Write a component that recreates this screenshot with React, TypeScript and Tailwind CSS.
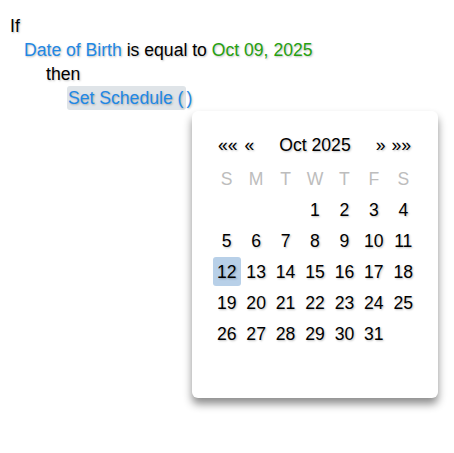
import React from "react";

const weekDays = ["S", "M", "T", "W", "T", "F", "S"];

function buildDays() {
  // Oct 2025 starts on Wednesday
  const cells: (number | null)[] = [null, null, null];
  for (let d = 1; d <= 31; d++) cells.push(d);
  while (cells.length < 42) cells.push(null);
  return cells;
}

export default function App() {
  const days = buildDays();
  const shadow = "[text-shadow:1px_1px_2px_rgba(0,0,0,0.25)]";

  return (
    <div
      className={`relative w-[454px] h-[453px] bg-white text-[17.6px] leading-[24px] text-black ${shadow}`}
      style={{ fontFamily: '"Liberation Sans", Arial, sans-serif' }}
    >
      <div className="pt-[14px]">
        <div className="pl-[10px]">If</div>
        <div className="pl-[24px]">
          <span className="text-[#1e88e5]">Date of Birth</span> is equal to{" "}
          <span className="text-[#25a010]">Oct 09, 2025</span>
        </div>
        <div className="pl-[46px]">then</div>
        <div className="pl-[67px] text-[#1e88e5]">
          <span className="inline-block rounded-[3px] bg-[#dfe4e8] pl-[1px] pr-[3px]">
            Set Schedule (
          </span>
          )
        </div>
      </div>

      {/* date picker dropdown */}
      <div className="absolute left-[192px] top-[111px] w-[246px] rounded-[6px] bg-white px-[20px] pt-[18px] pb-[18px] shadow-[0_6px_9px_rgba(0,0,0,0.45)]">
        <div className="flex h-[32px] items-center justify-between pl-[6px] pr-[7px]">
          <div className="flex gap-[7px]">
            <span>««</span>
            <span>«</span>
          </div>
          <span>Oct 2025</span>
          <div className="flex gap-[6px]">
            <span>»</span>
            <span>»»</span>
          </div>
        </div>
        <div className="mt-[2px] grid grid-cols-7">
          {weekDays.map((d, i) => (
            <div
              key={i}
              className="flex h-[31px] items-center justify-center text-[#bdbdbd] [text-shadow:none]"
            >
              {d}
            </div>
          ))}
        </div>
        <div className="grid grid-cols-7">
          {days.map((d, i) => (
            <div key={i} className="flex h-[31px] items-center justify-center">
              {d === 12 ? (
                <span className="flex h-[29px] w-[28px] items-center justify-center rounded-[3px] bg-[#b8d0e8]">
                  12
                </span>
              ) : (
                d
              )}
            </div>
          ))}
        </div>
      </div>
    </div>
  );
}
